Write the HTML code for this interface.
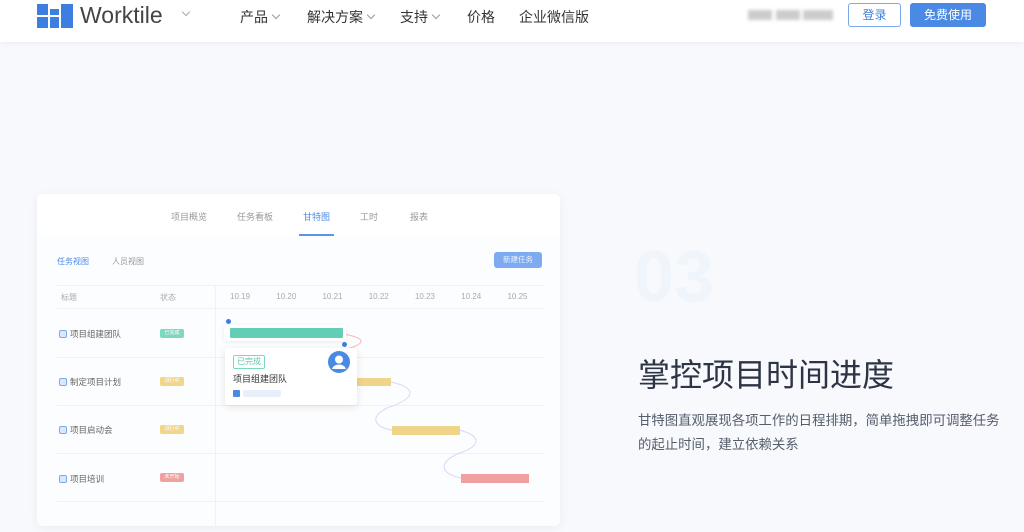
<!DOCTYPE html>
<html><head><meta charset="utf-8"><style>
*{margin:0;padding:0;box-sizing:border-box}
body{width:1024px;height:532px;overflow:hidden;background:#f7f9fc;font-family:"Liberation Sans","Noto Sans CJK SC",sans-serif;position:relative}
.a{position:absolute}
.hd{left:0;top:0;width:1024px;height:42px;background:#fff;box-shadow:0 1px 6px rgba(0,0,0,.05)}
.nav{font-size:14px;color:#333;top:7px}
.chev{display:inline-block;width:6px;height:6px;border-right:1px solid #999;border-bottom:1px solid #999;transform:rotate(45deg);margin-left:5px;position:relative;top:-4px}
.card{left:37px;top:194px;width:523px;height:332px;background:#fcfdfe;border-radius:6px;box-shadow:0 2px 10px rgba(30,50,90,.06);overflow:hidden}
.t{font-size:9px;color:#999}
.row{font-size:8.5px;color:#666}
.ic{display:inline-block;width:8px;height:8px;border:1.5px solid #7ba9ee;border-radius:2px;background:#dbe8fb;vertical-align:-1px;margin-right:3px}
.tag{width:24px;height:9px;border-radius:2px;font-size:5px;color:#fff;text-align:center;line-height:9px}
.line{height:1px;background:#eef1f5}
</style></head><body>
<div class="a hd"></div>
<svg class="a" style="left:37px;top:4px" width="36" height="24"><rect x="0" y="0" width="11" height="11" fill="#3d7fe0"/><rect x="13" y="5" width="9" height="6" fill="#3d7fe0"/><rect x="24" y="0" width="12" height="24" fill="#3d7fe0"/><rect x="0" y="13" width="11" height="11" fill="#3d7fe0"/><rect x="13" y="13" width="9" height="11" fill="#3d7fe0"/></svg>
<div class="a" style="left:80px;top:2px;font-size:23px;color:#444">Worktile</div>
<div class="a" style="left:178px;top:6px"><span class="chev" style="border-color:#aaa"></span></div>
<div class="a nav" style="left:240px">产品<span class="chev"></span></div>
<div class="a nav" style="left:307px">解决方案<span class="chev"></span></div>
<div class="a nav" style="left:400px">支持<span class="chev"></span></div>
<div class="a nav" style="left:467px">价格</div>
<div class="a nav" style="left:519px">企业微信版</div>
<div class="a" style="left:748px;top:10px;width:24px;height:10px;background:#ccc;filter:blur(1.5px)"></div>
<div class="a" style="left:776px;top:10px;width:24px;height:10px;background:#ccc;filter:blur(1.5px)"></div>
<div class="a" style="left:803px;top:10px;width:30px;height:10px;background:#ccc;filter:blur(1.5px)"></div>
<div class="a" style="left:848px;top:3px;width:53px;height:24px;border:1px solid #7aa8ec;border-radius:3px;color:#3d7fe0;font-size:12px;text-align:center;line-height:22px">登录</div>
<div class="a" style="left:910px;top:3px;width:76px;height:24px;background:#4a8ae4;border-radius:3px;color:#fff;font-size:12px;text-align:center;line-height:24px">免费使用</div>

<div class="a card">
 <div class="a" style="left:0;top:0;width:523px;height:43px;background:#fff"></div>
 <div class="a t" style="left:134px;top:16px">项目概览</div>
 <div class="a t" style="left:200px;top:16px">任务看板</div>
 <div class="a t" style="left:266px;top:16px;color:#4a8ae4">甘特图</div>
 <div class="a t" style="left:323px;top:16px">工时</div>
 <div class="a t" style="left:373px;top:16px">报表</div>
 <div class="a" style="left:262px;top:40px;width:35px;height:2px;background:#5b95e8"></div>
 <div class="a t" style="left:20px;top:62px;font-size:8px;color:#4a8ae4">任务视图</div>
 <div class="a t" style="left:75px;top:62px;font-size:8px">人员视图</div>
 <div class="a" style="left:457px;top:58px;width:48px;height:16px;background:#7eaaf0;border-radius:3px;color:#eaf2ff;font-size:7.5px;text-align:center;line-height:16px">新建任务</div>
 <div class="a line" style="left:20px;top:91px;width:487px"></div>
 <div class="a line" style="left:20px;top:114px;width:487px"></div>
 <div class="a" style="left:178px;top:91px;width:1px;height:241px;background:#eef1f5"></div>
 <div class="a t" style="left:24px;top:98px;font-size:8px;color:#aaa">标题</div>
 <div class="a t" style="left:123px;top:98px;font-size:8px;color:#aaa">状态</div>
 <div class="a t" style="left:193px;top:98px;font-size:8px;color:#aaa;word-spacing:24px">10.19 10.20 10.21 10.22 10.23 10.24 10.25</div>
 <div class="a line" style="left:20px;top:163px;width:487px"></div>
 <div class="a line" style="left:20px;top:211px;width:487px"></div>
 <div class="a line" style="left:20px;top:259px;width:487px"></div>
 <div class="a line" style="left:20px;top:307px;width:487px"></div>
 <div class="a row" style="left:22px;top:134px"><span class="ic"></span>项目组建团队</div>
 <div class="a row" style="left:22px;top:182px"><span class="ic"></span>制定项目计划</div>
 <div class="a row" style="left:22px;top:230px"><span class="ic"></span>项目启动会</div>
 <div class="a row" style="left:22px;top:279px"><span class="ic"></span>项目培训</div>
 <div class="a tag" style="left:123px;top:135px;background:#7ed8c0">已完成</div>
 <div class="a tag" style="left:123px;top:183px;background:#f2d48a">进行中</div>
 <div class="a tag" style="left:123px;top:231px;background:#f2d48a">进行中</div>
 <div class="a tag" style="left:123px;top:279px;background:#f0a0a0">未开始</div>
 <svg class="a" style="left:0;top:0" width="523" height="332" fill="none">
  <path d="M306 140 C330 144,330 150,306 156" stroke="#f3b6b6"/>
  <path d="M354 188 C380 194,380 204,350 214 C330 224,340 234,355 236" stroke="#cfdcf6"/>
  <path d="M422 236 C445 242,445 252,420 260 C400 270,405 280,424 284" stroke="#cfdcf6"/>
 </svg>
 <div class="a" style="left:308px;top:184px;width:46px;height:8px;background:#f0d48a"></div>
 <div class="a" style="left:355px;top:232px;width:68px;height:9px;background:#f0d48a"></div>
 <div class="a" style="left:424px;top:280px;width:68px;height:9px;background:#f0a0a0"></div>
 <div class="a" style="left:187px;top:131px;width:122px;height:16px;background:#fff;box-shadow:0 1px 4px rgba(0,0,0,.08)"></div>
 <div class="a" style="left:193px;top:134px;width:113px;height:10px;background:#62ceb6;border-radius:1px"></div>
 <div class="a" style="left:189px;top:125px;width:5px;height:5px;border-radius:50%;background:#3d7fe0"></div>
 <div class="a" style="left:305px;top:148px;width:5px;height:5px;border-radius:50%;background:#3d7fe0"></div>
 <div class="a" style="left:188px;top:154px;width:132px;height:57px;background:#fff;border-radius:3px;box-shadow:0 2px 8px rgba(0,0,0,.1)"></div>
 <div class="a" style="left:196px;top:161px;width:32px;height:14px;border:1px solid #7ed8c0;border-radius:2px;color:#5cc8ae;font-size:8px;text-align:center;line-height:12px">已完成</div>
 <div class="a" style="left:196px;top:178px;font-size:9px;color:#333">项目组建团队</div>
 <div class="a" style="left:196px;top:196px;width:7px;height:7px;background:#4a8ae4;border-radius:1px"></div>
 <div class="a" style="left:206px;top:196px;width:38px;height:7px;background:#e8eefa;border-radius:2px"></div>
 <svg class="a" style="left:291px;top:157px" width="22" height="22"><circle cx="11" cy="11" r="11" fill="#4a8ae4"/><circle cx="11" cy="8.5" r="4" fill="#fff"/><path d="M4 18 C6 12,16 12,18 18 Z" fill="#fff"/></svg>
</div>

<div class="a" style="left:634px;top:236px;font-size:72px;font-weight:bold;color:#f0f5fb">03</div>
<div class="a" style="left:638px;top:350px;font-size:32px;color:#2d3445">掌控项目时间进度</div>
<div class="a" style="left:638px;top:409px;width:362px;font-size:13.4px;line-height:24px;color:#555c6b">甘特图直观展现各项工作的日程排期，简单拖拽即可调整任务的起止时间，建立依赖关系</div>
</body></html>
